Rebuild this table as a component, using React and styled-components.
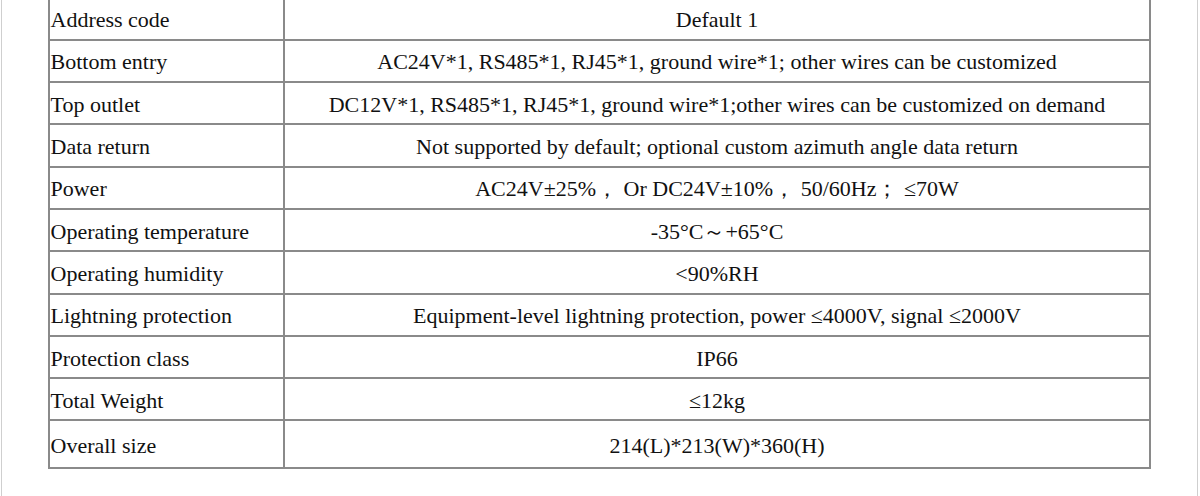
import React from "react";
import styled, { createGlobalStyle } from "styled-components";

const GlobalStyle = createGlobalStyle`
  html, body {
    margin: 0;
    padding: 0;
    background: #ffffff;
  }
  body {
    font-family: "Liberation Serif", "Times New Roman", serif;
    color: #111;
  }
`;

const Page = styled.div`
  box-sizing: border-box;
  width: 1197px;
  height: 496px;
  overflow: hidden;
  margin-left: 1px;
  padding-left: 46px;
  border-left: 1px solid #cfcfcf;
  border-right: 1px solid #cfcfcf;
`;

const Table = styled.div`
  width: 1103px;
  margin-top: -1.5px;
  border-left: 2px solid #8a8a8a;
  border-right: 2px solid #8a8a8a;
  box-sizing: border-box;
`;

const Row = styled.div`
  display: grid;
  grid-template-columns: 235px 1fr;
  box-sizing: border-box;
  height: ${(p) => (p.$last ? "47.3px" : "42.3px")};
  border-bottom: 2px solid #8a8a8a;
`;

const Cell = styled.div`
  display: flex;
  align-items: center;
  justify-content: ${(p) => (p.$label ? "flex-start" : "center")};
  padding-top: 3px;
  padding-left: ${(p) => (p.$label ? "0.5px" : "0")};
  border-right: ${(p) => (p.$label ? "2px solid #8a8a8a" : "none")};
  font-size: 22px;
  line-height: 1;
  white-space: nowrap;
  color: #111;
`;

const rows = [
  ["Address code", "Default 1"],
  [
    "Bottom entry",
    "AC24V*1, RS485*1, RJ45*1, ground wire*1; other wires can be customized",
  ],
  [
    "Top outlet",
    "DC12V*1, RS485*1, RJ45*1, ground wire*1;other wires can be customized on demand",
  ],
  [
    "Data return",
    "Not supported by default; optional custom azimuth angle data return",
  ],
  ["Power", "AC24V\u00b125%\uff0c Or DC24V\u00b110%\uff0c 50/60Hz\uff1b \u226470W"],
  ["Operating temperature", "-35\u00b0C\uff5e+65\u00b0C"],
  ["Operating humidity", "<90%RH"],
  [
    "Lightning protection",
    "Equipment-level lightning protection, power \u22644000V, signal \u22642000V",
  ],
  ["Protection class", "IP66"],
  ["Total Weight", "\u226412kg"],
  ["Overall size", "214(L)*213(W)*360(H)"],
];

const App = () => {
  return (
    <>
      <GlobalStyle />
      <Page>
        <Table>
          {rows.map(([label, value], i) => (
            <Row key={label} $last={i === rows.length - 1}>
              <Cell $label>{label}</Cell>
              <Cell>{value}</Cell>
            </Row>
          ))}
        </Table>
      </Page>
    </>
  );
};

export default App;
